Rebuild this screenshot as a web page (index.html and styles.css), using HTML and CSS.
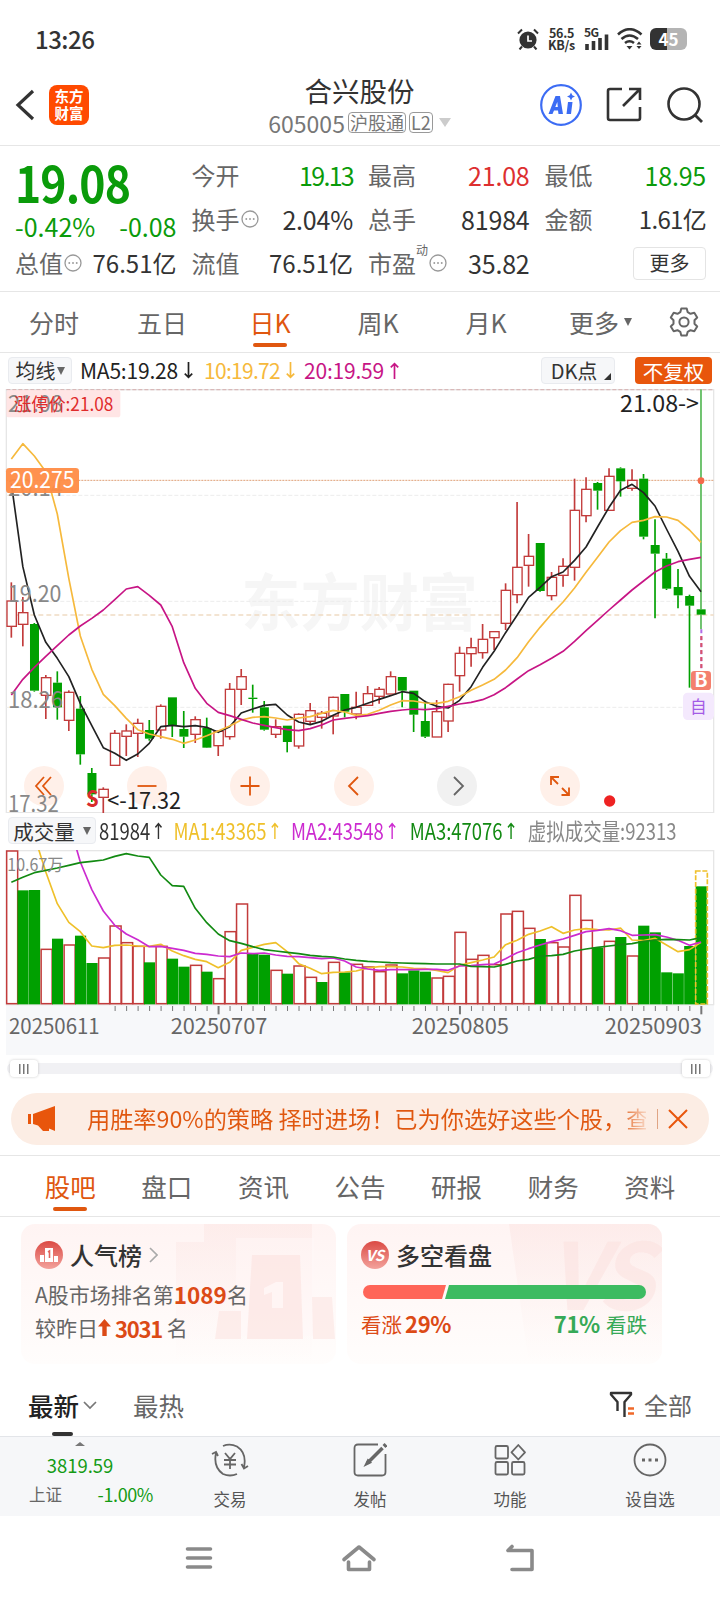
FILE: index.html
```html
<!DOCTYPE html>
<html lang="zh-CN">
<head>
    <meta charset="UTF-8">
    <meta name="viewport" content="width=device-width, initial-scale=1.0">
    <title>合兴股份 605005</title>
    <link rel="stylesheet" href="styles.css">
</head>
<body>
    <div class="status-bar">
        <span class="clock">13:26</span>
        <div class="status-icons">
            <svg width="22" height="22" viewBox="0 0 22 22"><circle cx="11" cy="12" r="8.6" fill="#333"/><path d="M1 5.5L5 1.5M21 5.5L17 1.5M5 18.5L2.5 21.5M17 18.5L19.5 21.5" stroke="#333" stroke-width="2"/><path d="M11 7.5V13H15" stroke="#fff" stroke-width="1.7" fill="none"/></svg>
            <div class="net-speed">56.5<br>KB/s</div>
            <svg width="26" height="22" viewBox="0 0 26 22"><text x="0" y="9" class="net-type">5G</text><path d="M3 16V22M9.5 13V22M16 10V22M22.500 6.5V22" stroke="#333" stroke-width="3.6"/></svg>
            <svg width="26" height="22" viewBox="0 0 26 22"><path d="M1 6.5Q12.5 -4 24.5 6.5M4.5 11Q12.5 4 21 11M8 15Q12.5 11.5 17 15" fill="none" stroke="#333" stroke-width="2.6"/><path d="M9.5 18H15.5L12.5 21.5Z" fill="#333"/><path d="M19.5 16.5L22 13.5L24.5 16.5ZM19.5 18L22 21L24.5 18Z" fill="#333"/></svg>
            <div class="battery">45</div>
        </div>
    </div>

    <header class="header">
        <div class="header-left">
            <svg width="20" height="32" viewBox="0 0 20 32"><path d="M18 2L3 16L18 30" fill="none" stroke="#333" stroke-width="3.2"/></svg>
            <div class="logo">东方<br>财富</div>
        </div>
        <div class="header-title">
            <h1>合兴股份</h1>
            <div class="stock-code">605005<span class="tag">沪股通</span><span class="tag">L2</span><i class="caret"></i></div>
        </div>
        <div class="header-right">
            <svg width="42" height="42" viewBox="0 0 42 42"><circle cx="21" cy="21" r="19.8" fill="#fff" stroke="#3c6cf4" stroke-width="2.2"/><path d="M8.5 30L15.5 12H20L23 30H18.5L18 26.5H14L12.5 30ZM15.3 23H17.8L17.3 18Z" fill="#3c6cf4" fill-rule="evenodd"/><path d="M28 18H32.5L31 30H26.5ZM31 8.5L32.3 11.2L35 12.5L32.3 13.8L31 16.5L29.7 13.8L27 12.5L29.7 11.2Z" fill="#3c6cf4"/></svg>
            <svg width="36" height="36" viewBox="0 0 36 36"><path d="M16 2H4Q2 2 2 4V31Q2 33 4 33H32Q34 33 34 31V20M23 2H34V13M33 3L17 19" fill="none" stroke="#333" stroke-width="2.6"/></svg>
            <svg width="38" height="38" viewBox="0 0 38 38"><circle cx="18" cy="18" r="15.5" fill="none" stroke="#333" stroke-width="2.6"/><path d="M29 29L36 36" stroke="#333" stroke-width="2.8"/></svg>
        </div>
    </header>

    <section class="quote">
        <div class="price-block">
            <div class="price">19.08</div>
            <div class="change"><span>-0.42%</span><span>-0.08</span></div>
        </div>
        <div class="cell"><span>今开</span><b class="down tight">19.13</b></div>
        <div class="cell"><span>最高</span><b class="up">21.08</b></div>
        <div class="cell"><span>最低</span><b class="down">18.95</b></div>
        <div class="cell"><span>换手<svg class="dots"><use href="#dots"/></svg></span><b>2.04%</b></div>
        <div class="cell"><span>总手</span><b>81984</b></div>
        <div class="cell"><span>金额</span><b class="tight-cn">1.61亿</b></div>
        <div class="cell"><span>总值<svg class="dots"><use href="#dots"/></svg></span><b class="cn">76.51亿</b></div>
        <div class="cell"><span>流值</span><b class="cn">76.51亿</b></div>
        <div class="cell"><span>市盈<sup>动</sup><svg class="dots"><use href="#dots"/></svg></span><b>35.82</b></div>
        <div class="cell cell-more"><button class="more-btn">更多</button></div>
    </section>

    <nav class="period-tabs">
        <a>分时</a>
        <a>五日</a>
        <a class="active">日K</a>
        <a>周K</a>
        <a>月K</a>
        <a class="more">更多<i class="caret caret-sm"></i></a>
        <a><svg width="30" height="30" viewBox="0 0 30 30"><path d="M12.3 1.5H17.7L18.7 5.2L21.5 6.8L25.3 5.8L28.2 10.5L25.5 13.3V16.7L28.2 19.5L25.3 24.2L21.5 23.2L18.7 24.8L17.7 28.5H12.3L11.3 24.8L8.5 23.2L4.7 24.2L1.8 19.5L4.5 16.7V13.3L1.8 10.5L4.7 5.8L8.5 6.8L11.3 5.2Z" fill="none" stroke="#666" stroke-width="2" stroke-linejoin="round"/><circle cx="15" cy="15" r="4.6" fill="none" stroke="#666" stroke-width="2"/></svg></a>
    </nav>

    <div class="ma-row">
        <button class="chip">均线<i class="caret caret-sm"></i></button>
        <span class="ma5">MA5:19.28<svg class="arrow"><use href="#arrow-down"/></svg></span>
        <span class="ma10">10:19.72<svg class="arrow"><use href="#arrow-down"/></svg></span>
        <span class="ma20">20:19.59<svg class="arrow"><use href="#arrow-up"/></svg></span>
        <button class="chip chip-dk">DK点<i class="corner"></i></button>
        <button class="chip chip-on">不复权</button>
    </div>

    <div class="chart">
        <div class="chart-tools">
            <button><svg width="20" height="20" viewBox="0 0 20 20"><path d="M10 1L2 10L10 19M17 1L9 10L17 19"/></svg></button>
            <button><svg width="20" height="20" viewBox="0 0 20 20"><path d="M0.5 10H19.5"/></svg></button>
            <button><svg width="20" height="20" viewBox="0 0 20 20"><path d="M0.5 10H19.5M10 0.5V19.5"/></svg></button>
            <button><svg width="20" height="20" viewBox="0 0 20 20"><path d="M14 1L5 10L14 19"/></svg></button>
            <button class="gray"><svg width="20" height="20" viewBox="0 0 20 20"><path d="M7 1L16 10L7 19"/></svg></button>
            <button><svg width="20" height="20" viewBox="0 0 20 20"><path d="M1 9V1H9M1 1L8 8M11.5 19H19V11.5M19 19L12 12"/></svg></button>
        </div>
        <svg id="kline" width="720" height="424" viewBox="0 27 2160 1272"></svg>
    </div>

    <div class="vol-row">
        <button class="chip">成交量<i class="caret caret-sm"></i></button>
        <div class="vol-values">
            <span>81984<svg class="arrow"><use href="#arrow-up"/></svg></span>
            <span class="vma1">MA1:43365<svg class="arrow"><use href="#arrow-up"/></svg></span>
            <span class="vma2">MA2:43548<svg class="arrow"><use href="#arrow-up"/></svg></span>
            <span class="vma3">MA3:47076<svg class="arrow"><use href="#arrow-up"/></svg></span>
            <span class="vest">虚拟成交量:92313</span>
        </div>
    </div>

    <svg id="volume" class="volume" width="720" height="205" viewBox="0 119 2160 615"></svg>

    <div class="range"><i></i><i></i></div>

    <div class="banner">
        <svg width="28" height="26" viewBox="0 0 28 26"><path d="M0 8H3V18H0ZM5 8L27 0V25L21 22.5V25H15L10 19.5L5 18Z" fill="#e8560c"/></svg>
        <div class="banner-text">用胜率90%的策略 择时进场！已为你选好这些个股，查</div>
        <i class="banner-line"></i>
        <svg width="20" height="20" viewBox="0 0 20 20"><path d="M1 1L19 19M19 1L1 19" stroke="#e8560c" stroke-width="2"/></svg>
    </div>

    <nav class="section-tabs">
        <a class="active">股吧</a>
        <a>盘口</a>
        <a>资讯</a>
        <a>公告</a>
        <a>研报</a>
        <a>财务</a>
        <a>资料</a>
    </nav>

    <div class="cards">
        <div class="card">
            <svg class="card-bg" width="160" height="140" viewBox="0 0 160 140">
                <path d="M0 18H28V0H136V140H0Z" fill="url(#fade)" opacity=".45"/>
                <path d="M60 14H138V112H60Z" fill="#fff8f7" opacity=".5"/>
                <path d="M76 31H124L127 115H71Z" fill="#fce3e1" opacity=".65"/>
                <path d="M43 87H65V115H39ZM136 73H156L159 115H137Z" fill="#fce6e4" opacity=".65"/>
                <path d="M88 64L100 58H107V84H96V68L88 71Z" fill="#fff5f4"/>
            </svg>
            <div class="card-title">
                <svg width="28" height="28" viewBox="0 0 28 28"><circle cx="14" cy="14" r="14" fill="url(#badge)"/><path d="M10 7H18V21H10ZM5 14H9V21H5ZM19 15H23V21H19Z" fill="#fff"/><path d="M13 11L14.5 10V17" stroke="#e1635c" stroke-width="1.6" fill="none"/></svg>
                <h2>人气榜</h2>
                <svg width="9" height="16" viewBox="0 0 9 16"><path d="M1 1L8 8L1 15" fill="none" stroke="#aaa" stroke-width="1.6"/></svg>
            </div>
            <p>A股市场排名第<b>1089</b>名</p>
            <p>较昨日<svg width="13" height="17" viewBox="0 0 13 17"><path d="M6.5 0L13 7.5H8.7V17H4.3V7.5H0Z" fill="#dc4a16"/></svg><b class="rise">3031</b> 名</p>
        </div>
        <div class="card">
            <svg class="card-bg" width="153" height="140" viewBox="0 0 153 140">
                <path d="M0 0H153V140H20Z" fill="url(#fade)" opacity=".5"/>
                <text x="38" y="86" class="vs-mark">VS</text>
            </svg>
            <div class="card-title">
                <svg width="28" height="28" viewBox="0 0 28 28"><circle cx="14" cy="14" r="14" fill="url(#badge)"/><text x="14" y="20" class="vs-badge">VS</text></svg>
                <h2>多空看盘</h2>
            </div>
            <div class="vote-bar"><i class="vote-up"></i><i class="vote-down"></i></div>
            <div class="vote-text"><span class="bull">看涨<b>29%</b></span><span class="bear"><b>71%</b>看跌</span></div>
        </div>
    </div>

    <div class="sort-row">
        <a class="active">最新<svg width="14" height="9" viewBox="0 0 14 9"><path d="M1 1L7 7L13 1" fill="none" stroke="#777" stroke-width="1.7"/></svg></a>
        <a>最热</a>
        <a class="filter"><svg width="26" height="28" viewBox="0 0 26 28"><path d="M8.5 20V11L2 3.5V2H22V3.5L15.5 11V26" fill="none" stroke="#333" stroke-width="2.4" stroke-linejoin="round"/><path d="M19 17.5H25M19 22.5H25" stroke="#f0682a" stroke-width="2.6"/></svg>全部</a>
    </div>

    <footer class="tool-bar">
        <div class="index">
            <i class="index-caret"></i>
            <div class="index-value">3819.59</div>
            <div class="index-change"><span>上证</span><b>-1.00%</b></div>
        </div>
        <a><svg width="38" height="34" viewBox="0 0 38 34"><path d="M12 3Q19 0 26 3.5Q36 10 33 24M26 31Q19 34 12 31Q2 24 5 10M1 11L5 9L7 13M37 23L33 25.5L30.5 21M14 10L19 16L24 10M19 16V26M13 17H25M13 21.5H25"/></svg>交易</a>
        <a><svg width="34" height="34" viewBox="0 0 34 34"><path d="M25 1.5H5Q1.500 1.5 1.5 5V29Q1.5 32.5 5 32.5H29Q32.5 32.5 32.5 29V11"/><path d="M29.5 5L14.5 20" stroke-width="3.6"/><path d="M15 17L12.500 22L17.500 19.500Z"/><path d="M31 3.5L33 1.5" stroke-width="4"/></svg>发帖</a>
        <a><svg width="32" height="32" viewBox="0 0 32 32"><rect x="1.5" y="2" width="12.5" height="12.5" rx="1.5"/><rect x="1.5" y="18" width="12.5" height="12.5" rx="1.5"/><rect x="18" y="18" width="12.5" height="12.5" rx="1.5"/><path d="M24.3 1L31 8.3L24.3 15.5L17.5 8.3Z" stroke-linejoin="round"/></svg>功能</a>
        <a><svg width="34" height="34" viewBox="0 0 34 34"><circle cx="17" cy="17" r="15.5"/><path d="M9 17H12M15.5 17H18.5M22 17H25" stroke-width="3"/></svg>设自选</a>
    </footer>

    <div class="sys-nav">
        <svg width="28" height="24" viewBox="0 0 28 24"><path d="M2.500 3H25.500M2.500 12H25.500M2.500 21H25.500"/></svg>
        <svg width="36" height="28" viewBox="0 0 36 28"><path d="M3 15.5L18 3L33 15.5M7.5 18V25.5H28.5V18"/></svg>
        <svg width="30" height="28" viewBox="0 0 30 28"><path d="M7 2.5L3 6.5H27V25.5H7"/></svg>
    </div>

    <svg width="0" height="0" class="defs">
        <defs>
            <symbol id="arrow-up" viewBox="0 0 10 16"><path d="M5 16V1.5M1.5 5L5 1.5L8.5 5" fill="none" stroke="currentColor" stroke-width="1.6"/></symbol>
            <symbol id="arrow-down" viewBox="0 0 10 16"><path d="M5 0V14.5M1.5 11L5 14.5L8.5 11" fill="none" stroke="currentColor" stroke-width="1.6"/></symbol>
            <symbol id="dots" viewBox="0 0 18 18"><circle cx="9" cy="9" r="8" fill="none" stroke="#999" stroke-width="1.3"/><path d="M4.500 9H6.100M8.200 9H9.800M11.900 9H13.500" stroke="#888" stroke-width="1.600"/></symbol>
            <linearGradient id="badge" x1="0" y1="0" x2="0" y2="1"><stop offset="0" stop-color="#db4a44"/><stop offset="1" stop-color="#f3a29c"/></linearGradient>
            <linearGradient id="fade" x1="0" y1="0" x2="0" y2="1"><stop offset="0" stop-color="#fbe3e1"/><stop offset="1" stop-color="#fffdfc"/></linearGradient>
        </defs>
    </svg>

    <script src="chart.js"></script>
</body>
</html>
```
FILE: styles.css
```css
* {
    box-sizing: border-box;
}

body {
    margin: 0;
    width: 720px;
    height: 1600px;
    overflow: hidden;
    background: #fff;
    color: #333;
    font-family: "Noto Sans CJK SC", "Noto Sans", sans-serif;
    line-height: 1;
}

h1, h2, p {
    margin: 0;
    font-weight: normal;
}

i {
    font-style: normal;
}

svg {
    display: block;
    flex: none;
}

button {
    font-family: inherit;
    padding: 0;
    border: none;
}

.defs {
    position: absolute;
}

.caret {
    display: inline-block;
    border: 6.5px solid transparent;
    border-top: 9px solid #ccc;
    border-bottom: none;
}

.caret-sm {
    border-width: 4.5px;
    border-top: 8px solid #666;
    border-bottom: none;
}

/* status bar */
.status-bar {
    height: 72px;
    padding: 6px 33px 0 35px;
    display: flex;
    align-items: center;
    justify-content: space-between;
}

.clock {
    font-size: 24px;
    font-weight: 500;
    letter-spacing: -0.5px;
}

.status-icons {
    display: flex;
    align-items: center;
    gap: 7px;
}

.net-speed {
    width: 31px;
    font-size: 12.5px;
    font-weight: bold;
    text-align: center;
    letter-spacing: -0.3px;
}

.net-type {
    font-size: 12px;
    font-weight: bold;
    letter-spacing: -0.5px;
    fill: #333;
}

.battery {
    width: 37px;
    height: 22px;
    border-radius: 6px;
    background: linear-gradient(to right, #333 45%, #b4b4b4 45%);
    color: #fff;
    font-size: 17px;
    font-weight: bold;
    line-height: 21px;
    text-align: center;
}

/* header */
.header {
    height: 74px;
    border-bottom: 1px solid #e6e6e6;
    padding: 0 16px 7px 15px;
    display: grid;
    grid-template-columns: 1fr 190px 1fr;
    align-items: center;
}

.header-left {
    display: flex;
    align-items: center;
    gap: 14px;
}

.logo {
    width: 40px;
    height: 40px;
    border-radius: 8px;
    background: #ff4a00;
    color: #fff;
    font-size: 14.5px;
    font-weight: bold;
    line-height: 16.5px;
    padding-top: 3px;
    text-align: center;
}

.header-title {
    display: flex;
    flex-direction: column;
    align-items: center;
}

.header-title h1 {
    font-size: 27.5px;
    line-height: 38px;
    margin-top: -3px;
}

.stock-code {
    display: flex;
    align-items: center;
    color: #777;
    font-size: 23px;
    line-height: 28px;
    white-space: nowrap;
}

.tag {
    border: 1px solid #999;
    border-radius: 4px;
    font-size: 18px;
    line-height: 19px;
    padding: 0 1px;
    margin-left: 3px;
}

.stock-code .caret {
    margin-left: 6px;
}

.header-right {
    display: flex;
    align-items: center;
    justify-content: flex-end;
    gap: 24px;
}

/* quote numbers */
.quote {
    height: 146px;
    padding: 7px 14px 7px 15px;
    border-bottom: 1px solid #e6e6e6;
    display: grid;
    grid-template-columns: repeat(4, 1fr);
    grid-template-rows: repeat(3, 44px);
    column-gap: 15px;
}

.price-block {
    grid-row: span 2;
    color: #0a9b0a;
}

.price {
    font-size: 50px;
    font-weight: bold;
    letter-spacing: -1px;
    line-height: 57px;
    transform: scaleX(0.89);
    transform-origin: left;
}

.change {
    display: flex;
    justify-content: space-between;
    font-size: 25px;
    line-height: 32px;
}

.cell {
    display: flex;
    align-items: center;
    justify-content: space-between;
    font-size: 24px;
    color: #666;
    white-space: nowrap;
}

.cell > span {
    display: flex;
    align-items: center;
}

.cell b {
    font-size: 25px;
    font-weight: normal;
    letter-spacing: -0.2px;
    color: #333;
}

.cell b.cn {
    font-size: 24px;
    letter-spacing: 0;
}

.cell b.tight-cn {
    font-size: 24px;
    letter-spacing: -0.7px;
}

.cell b.tight {
    letter-spacing: -1.7px;
}

.cell b.up {
    color: #dd2f2f;
}

.cell b.down {
    color: #0a9b0a;
}

.cell sup {
    font-size: 12px;
    align-self: flex-start;
    margin-top: -7px;
}

.dots {
    width: 18px;
    height: 18px;
    margin-left: 1px;
}

.cell-more {
    justify-content: flex-end;
}

.more-btn {
    width: 73px;
    height: 33px;
    border: 1px solid #e4e4e4;
    border-radius: 4px;
    background: #fff;
    color: #333;
    font-size: 20px;
    line-height: 28px;
}

/* period tabs */
.period-tabs {
    height: 61px;
    border-bottom: 1px solid #e6e6e6;
    display: grid;
    grid-template-columns: repeat(6, 108px) 72px;
}

.period-tabs a {
    position: relative;
    display: flex;
    align-items: center;
    justify-content: center;
    gap: 5px;
    font-size: 25px;
    color: #666;
}

.period-tabs .more {
    padding-left: 13px;
}

.period-tabs .active,
.section-tabs .active {
    color: #e0570f;
}

.period-tabs .active::after,
.section-tabs .active::after {
    content: "";
    position: absolute;
    left: 50%;
    bottom: 5px;
    width: 34px;
    height: 4px;
    margin-left: -17px;
    border-radius: 2px;
    background: #e0570f;
}

/* moving averages */
.ma-row {
    height: 36px;
    padding: 0 8px 1px 8px;
    display: flex;
    align-items: center;
    font-size: 21px;
    letter-spacing: -0.2px;
    white-space: nowrap;
}

.ma-row span {
    display: flex;
    align-items: center;
    gap: 4px;
}

.arrow {
    width: 13px;
    height: 17px;
}

.chip {
    display: flex;
    flex: none;
    align-items: center;
    justify-content: center;
    height: 27px;
    border: 1px solid #e9ebef;
    border-radius: 4px;
    background: #f6f7f9;
    color: #333;
    font-size: 20px;
    white-space: nowrap;
}

.ma-row .chip:first-child {
    width: 64px;
    gap: 1px;
    margin-right: 8px;
}

.ma5 {
    width: 124px;
    color: #222;
}

.ma10 {
    width: 100px;
    color: #f6b93c;
    letter-spacing: -0.7px;
}

.ma20 {
    color: #c71585;
}

.chip-dk {
    position: relative;
    width: 74px;
    margin-left: auto;
    margin-right: 20px;
    padding-right: 8px;
}

.corner {
    position: absolute;
    right: 3px;
    bottom: 3px;
    border-left: 7px solid transparent;
    border-bottom: 7px solid #333;
}

.ma-row .chip-on {
    width: 77px;
    border: none;
    background: #e8560c;
    color: #fff;
    font-size: 20.5px;
}

/* chart */
.chart {
    position: relative;
    height: 424px;
}

#kline {
    position: relative;
}

.chart-tools {
    position: absolute;
    left: 24px;
    top: 377px;
    display: flex;
    gap: 63.2px;
}

.chart-tools button {
    width: 40px;
    height: 40px;
    border-radius: 50%;
    background: #fff0e9;
    display: flex;
    align-items: center;
    justify-content: center;
}

.chart-tools path {
    fill: none;
    stroke: #e0570f;
    stroke-width: 1.8;
}

.chart-tools .gray {
    background: #f1f1f1;
}

.chart-tools .gray path {
    stroke: #666;
}

#kline text,
#volume text {
    font-family: "Noto Sans CJK SC", sans-serif;
}

.vol-row {
    height: 37px;
    padding: 0 0 2px 8px;
    display: flex;
    align-items: center;
}

.vol-row .chip {
    width: 88px;
    gap: 8px;
    margin-right: 3px;
    font-size: 20.5px;
}

.vol-values {
    display: grid;
    grid-template-columns: 91px 143px 145px 144px auto;
    font-size: 22.5px;
    white-space: nowrap;
    transform: scaleX(0.82);
    transform-origin: left;
}

.vol-values span {
    display: flex;
    align-items: center;
    gap: 4px;
}

.vma1 {
    color: #efc02a;
}

.vma2 {
    color: #cc2bd0;
}

.vma3 {
    color: #128a12;
}

.vest {
    color: #888;
}

/* range slider */
.range {
    height: 11px;
    margin: 8px 7px 0 7px;
    border-radius: 6px;
    background: #f1f1f4;
    display: flex;
    align-items: center;
    justify-content: space-between;
    padding: 0 3px;
}

.range i {
    width: 28px;
    height: 17px;
    border-radius: 4px;
    background: linear-gradient(#777, #777) 9px 4px / 1.5px 10px no-repeat,
                linear-gradient(#777, #777) 13px 4px / 1.5px 10px no-repeat,
                linear-gradient(#777, #777) 17px 4px / 1.5px 10px no-repeat,
                #fff;
    box-shadow: 0 0 3px rgba(0, 0, 0, 0.2);
}

/* banner */
.banner {
    height: 52px;
    margin: 19px 11px 10px;
    padding: 0 21px 0 17px;
    border-radius: 26px;
    background: #fcede4;
    display: flex;
    align-items: center;
}

.banner-text {
    width: 560px;
    margin-left: 31px;
    font-size: 23.2px;
    line-height: 34px;
    margin-top: -2px;
    white-space: nowrap;
    overflow: hidden;
    color: transparent;
    background: linear-gradient(to right, #e0570f 95%, #fcede4 101%);
    -webkit-background-clip: text;
    background-clip: text;
}

.banner-line {
    width: 1px;
    height: 20px;
    margin: 0 10px 0 11px;
    background: #e0a584;
}

/* section tabs */
.section-tabs {
    height: 62px;
    border-top: 1px solid #e6e6e6;
    border-bottom: 1px solid #e6e6e6;
    padding: 0 22px;
    display: grid;
    grid-template-columns: repeat(7, 1fr);
}

.section-tabs a {
    position: relative;
    display: flex;
    align-items: center;
    justify-content: center;
    font-size: 25.5px;
    color: #666;
}

/* cards */
.cards {
    display: flex;
    gap: 11px;
    padding: 7px 21px 0;
}

.card {
    position: relative;
    width: 315px;
    height: 140px;
    padding: 17px 14px 0;
    border-radius: 14px;
    background: linear-gradient(#fff4f3, #fffdfc);
    overflow: hidden;
}

.card > * {
    position: relative;
}

.card .card-bg {
    position: absolute;
    right: 0;
    top: 0;
}

.card-title {
    display: flex;
    align-items: center;
    gap: 7px;
    height: 28px;
    margin-bottom: 9px;
}

.card-title h2 {
    font-size: 24px;
    font-weight: 500;
    line-height: 28px;
    margin-top: -1px;
}

.card p {
    display: flex;
    align-items: center;
    height: 33px;
    font-size: 21px;
    color: #666;
    white-space: pre;
}

.card p b {
    font-size: 22.5px;
    color: #dc4a16;
}

.card p .rise {
    font-size: 22px;
    letter-spacing: -1.2px;
}

.card p svg {
    margin: 0 4px 0 0;
}

.vs-mark {
    font-size: 92px;
    font-weight: bold;
    font-style: italic;
    letter-spacing: -6px;
    fill: #fbdcd9;
    opacity: 0.4;
}

.vs-badge {
    font-size: 15px;
    font-weight: bold;
    font-style: italic;
    fill: #fff;
    text-anchor: middle;
}

.vote-bar {
    display: flex;
    height: 14px;
    margin: 16px 2px 0 2px;
    border-radius: 7px;
    overflow: hidden;
}

.vote-up {
    width: 83px;
    background: #ff6558;
    clip-path: polygon(0 0, 100% 0, calc(100% - 4px) 100%, 0 100%);
}

.vote-down {
    flex: 1;
    margin-left: -1px;
    background: #3dbb61;
    clip-path: polygon(4px 0, 100% 0, 100% 100%, 0 100%);
}

.vote-text {
    display: flex;
    justify-content: space-between;
    margin-top: 13px;
    padding-right: 1px;
    font-size: 20.5px;
    line-height: 22px;
}

.vote-text b {
    font-size: 22px;
    letter-spacing: -0.3px;
}

.bull {
    color: #dc4a16;
}

.bull b {
    margin-left: 3px;
}

.bear {
    color: #36a957;
}

.bear b {
    margin-right: 6px;
}

/* sort row */
.sort-row {
    height: 73px;
    padding: 14px 28px 0;
    border-bottom: 1px solid #e3e5e9;
    display: flex;
    font-size: 25.5px;
    color: #666;
}

.sort-row a {
    position: relative;
    display: flex;
    align-items: center;
    height: 58px;
    padding-bottom: 4px;
}

.sort-row .active {
    width: 105px;
    gap: 4px;
    color: #222;
    font-weight: 500;
}

.sort-row .active::after {
    content: "";
    position: absolute;
    left: 24px;
    bottom: 0;
    width: 21px;
    height: 4px;
    border-radius: 2px;
    background: #333;
}

.sort-row .filter {
    margin-left: auto;
    gap: 9px;
    font-size: 24px;
}

/* bottom tools */
.tool-bar {
    height: 79px;
    background: #f6f7f9;
    display: grid;
    grid-template-columns: 160px repeat(4, 140px);
}

.tool-bar a {
    display: flex;
    flex-direction: column;
    align-items: center;
    padding-top: 6px;
    font-size: 16.5px;
    line-height: 20px;
    color: #555;
}

.tool-bar a svg {
    height: 34px;
    margin-bottom: 12px;
    fill: none;
    stroke: #666;
    stroke-width: 1.8;
}

.index {
    display: flex;
    flex-direction: column;
    align-items: center;
    color: #149b14;
}

.index-caret {
    margin-top: 5px;
    border: 5.5px solid transparent;
    border-top: none;
    border-bottom: 4.5px solid #777;
}

.index-value {
    font-size: 18.5px;
    line-height: 20px;
    margin-top: 9px;
}

.index-change {
    display: flex;
    justify-content: space-between;
    width: 124px;
    margin: 9px 0 0 22px;
    font-size: 16.5px;
    line-height: 20px;
}

.index-change span {
    color: #666;
}

.index-change b {
    font-weight: normal;
    font-size: 18px;
    letter-spacing: -0.4px;
}

.sys-nav {
    height: 84px;
    display: flex;
    align-items: center;
    justify-content: center;
    gap: 128px;
}

.sys-nav path {
    fill: none;
    stroke: #8a8a8a;
    stroke-width: 3.6;
    stroke-linecap: round;
    stroke-linejoin: round;
}
```
FILE: chart.js
```js
const RED = '#c23b3b';
const GREEN = '#00a000';
const step = 34.483;
const firstX = 34;

// [body top, body bottom, high, low, rising]
const candles = [
    [663, 739, 607, 773, 1], [698, 733, 651, 799, 1], [732, 932, 729, 935, 0], [893, 946, 885, 1017, 1],
    [908, 982, 874, 1019, 0], [937, 1021, 931, 1053, 1], [986, 1123, 948, 1154, 0], [1179, 1243, 1164, 1266, 0],
    [1228, 1252, 1222, 1300, 1], [1060, 1156, 1050, 1156, 1], [1053, 1069, 1033, 1128, 1], [1030, 1060, 1016, 1131, 1],
    [1050, 1076, 1020, 1082, 0], [979, 1050, 973, 1076, 1], [952, 1038, 952, 1071, 0], [1047, 1070, 993, 1104, 0],
    [1019, 1063, 1009, 1089, 1], [1044, 1103, 1013, 1104, 0], [1054, 1097, 1050, 1128, 1], [928, 1070, 909, 1079, 1],
    [890, 928, 867, 975, 1], [953, 957, 914, 998, 0], [982, 1049, 963, 1052, 0], [1040, 1063, 1018, 1074, 1],
    [1037, 1086, 1037, 1117, 0], [1003, 1098, 1000, 1106, 1], [992, 1024, 969, 1034, 1], [1000, 1012, 993, 1046, 1],
    [952, 1008, 950, 1063, 1], [942, 995, 942, 1012, 0], [982, 1002, 935, 1018, 1], [941, 976, 918, 976, 1],
    [928, 949, 921, 971, 1], [890, 942, 874, 942, 1], [891, 932, 891, 982, 0], [932, 1004, 932, 1056, 0],
    [1023, 1070, 962, 1074, 0], [995, 1071, 960, 1071, 1], [913, 1023, 911, 1056, 1], [820, 887, 800, 935, 1],
    [803, 821, 773, 860, 1], [778, 818, 732, 836, 1], [755, 773, 755, 810, 1], [631, 730, 610, 750, 1],
    [562, 644, 366, 670, 1], [529, 556, 462, 620, 1], [489, 633, 489, 635, 0], [592, 647, 576, 661, 1],
    [559, 586, 535, 620, 1], [391, 562, 296, 602, 1], [328, 407, 292, 427, 1], [309, 332, 306, 389, 0],
    [289, 391, 265, 391, 1], [265, 304, 262, 350, 0], [301, 325, 268, 332, 1], [296, 470, 282, 478, 0],
    [495, 521, 418, 715, 0], [536, 626, 519, 630, 0], [621, 646, 567, 685, 0], [648, 677, 644, 923, 0],
    [688, 704, 28, 748, 0]
];

const ma5 = [310, 560, 705, 787, 835, 890, 970, 1037, 1103, 1120, 1141, 1122, 1090, 1040, 1036, 1040, 1037, 1042, 1057, 1040,
    999, 987, 976, 973, 1005, 1026, 1034, 1024, 1006, 990, 982, 970, 958, 947, 935, 940, 965, 979, 984, 961,
    920, 862, 814, 758, 706, 652, 622, 590, 576, 541, 501, 441, 382, 331, 313, 338, 378, 447, 514, 589, 635];
const ma10 = [237, 191, 228, 275, 402, 595, 768, 868, 943, 977, 1015, 1049, 1062, 1070, 1078, 1090, 1080, 1067, 1053, 1038,
    1020, 1012, 1010, 1014, 1020, 1014, 1010, 1000, 991, 996, 1006, 1003, 991, 975, 962, 963, 969, 970, 964, 950,
    931, 915, 898, 870, 833, 785, 742, 702, 666, 624, 577, 532, 486, 452, 427, 421, 410, 411, 421, 450, 487];
const ma20 = [945, 898, 862, 829, 797, 765, 738, 715, 690, 659, 627, 620, 646, 675, 740, 848, 925, 970, 997, 1007,
    1018, 1029, 1036, 1043, 1049, 1052, 1046, 1035, 1020, 1015, 1011, 1007, 1000, 994, 990, 987, 989, 986, 979, 972,
    967, 959, 944, 923, 897, 872, 854, 835, 814, 784, 752, 721, 690, 660, 630, 603, 576, 558, 545, 538, 532];

const volumes = [121, 240, 239, 416, 385, 403, 376, 458, 442, 346, 396, 407, 456, 407, 445, 469, 464, 484, 504, 363,
    280, 430, 433, 479, 490, 466, 500, 515, 455, 486, 461, 469, 483, 463, 489, 480, 484, 502, 497, 365,
    446, 434, 462, 310, 302, 353, 386, 396, 409, 254, 329, 412, 392, 380, 436, 346, 366, 486, 489, 407, 228];
// Bars whose colour does not follow the candle above them
const volumeFalling = [1, 27];
const vma1 = [null, null, 76, 185, 280, 336, 364, 407, 412, 405, 404, 407, 408, 402, 422, 436, 447, 454, 472, 456,
    420, 411, 402, 397, 424, 460, 474, 490, 486, 485, 482, 473, 469, 469, 470, 474, 475, 480, 487, 465,
    457, 449, 440, 403, 390, 372, 362, 349, 369, 359, 355, 358, 359, 353, 389, 391, 384, 404, 424, 418, 396];
const vma2 = [null, null, null, null, null, 35, 155, 238, 302, 345, 371, 388, 409, 408, 414, 420, 429, 432, 437, 439,
    428, 430, 428, 434, 438, 439, 442, 445, 443, 452, 470, 476, 480, 478, 478, 478, 477, 477, 480, 467,
    466, 463, 461, 445, 427, 415, 404, 394, 386, 375, 364, 360, 355, 361, 375, 374, 373, 380, 390, 405, 395];
const vma3 = [216, 201, 187, 180, 173, 165, 157, 153, 149, 138, 130, 137, 141, 194, 226, 228, 294, 337, 371, 391,
    399, 409, 418, 422, 426, 430, 435, 438, 440, 446, 450, 453, 455, 457, 458, 459, 460, 461, 461, 461,
    468, 469, 470, 462, 452, 447, 437, 436, 432, 422, 416, 411, 407, 403, 400, 393, 389, 387, 388, 389, 382];

function xAt(i) {
    return firstX + i * step;
}

function line(x1, y1, x2, y2, color, width, dash) {
    return `<line x1="${x1}" y1="${y1}" x2="${x2}" y2="${y2}" stroke="${color}" stroke-width="${width}" stroke-dasharray="${dash || 'none'}"/>`;
}

function curve(values, color) {
    const points = [];
    values.forEach((y, i) => {
        if (y !== null) points.push(`${xAt(i).toFixed(1)},${y}`);
    });
    return `<polyline points="${points.join(' ')}" fill="none" stroke="${color}" stroke-width="5" stroke-linejoin="round"/>`;
}

function label(text, x, y, width, size, color, extra) {
    return `<text x="${x}" y="${y}" textLength="${width}" lengthAdjust="spacingAndGlyphs" font-size="${size}" fill="${color}" ${extra || ''}>${text}</text>`;
}

function drawKline() {
    let out = '';
    out += label('东方财富', 724, 738, 710, 186, '#f6f6f6', 'font-weight="bold"');

    // Frame and grid
    out += `<rect x="19" y="29" width="2122" height="1269" fill="none" stroke="#e6e6e6" stroke-width="4"/>`;
    out += line(19, 29, 2141, 29, '#d9b9b9', 4, '12 6');
    [346, 664, 982].forEach(y => {
        out += line(19, y, 2141, y, '#ececec', 3, '12 6');
    });
    out += line(19, 705, 2141, 705, '#f0dcc4', 5, '15 9');
    out += line(19, 301, 2141, 301, '#dfa077', 3, '6 3');

    candles.forEach(([top, bottom, high, low, rising], i) => {
        const x = xAt(i);
        const color = rising ? RED : GREEN;
        const wick = i === 60 ? '#55b855' : color;
        out += line(x, high, x, top, wick, 5);
        out += line(x, bottom, x, low, wick, 5);
        if (rising) {
            out += `<rect x="${x - 13}" y="${top}" width="28" height="${bottom - top}" fill="#fff" stroke="${RED}" stroke-width="4"/>`;
        } else {
            out += `<rect x="${x - 13}" y="${top}" width="27" height="${bottom - top}" fill="${GREEN}"/>`;
        }
    });

    out += curve(ma5, '#222');
    out += curve(ma10, '#f6b93c');
    out += curve(ma20, '#c71585');

    // Limit price and cursor price
    out += `<rect x="19" y="30" width="342" height="82" rx="8" fill="#ffdede" opacity=".8"/>`;
    out += label('21.08', 24, 97, 165, 70, '#888');
    out += label('涨停价:21.08', 42, 92, 298, 54, '#e02b2b');
    out += label('20.14', 24, 348, 165, 70, '#888');
    out += `<rect x="18" y="264" width="219" height="75" rx="10" fill="#ff8c46" opacity=".95"/>`;
    out += label('20.275', 30, 325, 193, 68, '#fff');
    out += label('19.20', 24, 666, 160, 70, '#888');
    out += label('18.26', 24, 985, 165, 70, '#888');
    out += label('17.32', 24, 1297, 152, 70, '#888');
    out += label('S', 258, 1281, 38, 68, '#d92b2b', 'font-weight="bold"');
    out += label('&lt;-17.32', 322, 1288, 221, 70, '#222');
    out += label('21.08-&gt;', 1860, 95, 237, 70, '#222');
    out += `<circle cx="2103" cy="302" r="10" fill="#f4694a"/>`;
    out += `<circle cx="1829" cy="1263" r="17" fill="#ee2222"/>`;

    // Buy mark and watchlist mark
    out += line(2104, 748, 2104, 880, '#b06be8', 6, '12 9');
    out += line(2104, 768, 2104, 880, '#d8546a', 6, '12 9');
    out += `<rect x="2049" y="938" width="93" height="82" rx="14" fill="#f4e9fd"/>`;
    out += `<rect x="2073" y="873" width="60" height="57" rx="10" fill="#f4806e"/>`;
    out += label('B', 2083, 922, 40, 58, '#fff', 'font-weight="bold"');
    out += label('自', 2070, 999, 50, 50, '#a45be6');
    document.getElementById('kline').innerHTML = out;
}

function drawVolume() {
    let out = '';
    out += `<rect x="18" y="584" width="2124" height="150" fill="#f7f8fa"/>`;
    out += `<rect x="19" y="121" width="2122" height="462" fill="none" stroke="#e6e6e6" stroke-width="4"/>`;

    volumes.forEach((top, i) => {
        const x = xAt(i) - 16;
        if (candles[i][4] && !volumeFalling.includes(i)) {
            out += `<rect x="${x + 2}" y="${top + 1}" width="33" height="${579 - top}" fill="#fff" stroke="${RED}" stroke-width="4.5"/>`;
        } else {
            out += `<rect x="${x}" y="${top}" width="33.5" height="${582 - top}" fill="${GREEN}"/>`;
        }
    });
    out += `<rect x="2087" y="182" width="35" height="399" fill="none" stroke="#efc02a" stroke-width="5" stroke-dasharray="15 5"/>`;

    out += curve(vma1, '#efc02a');
    out += curve(vma2, '#cc2bd0');
    out += curve(vma3, '#128a12');
    out += label('10.67万', 22, 182, 168, 50, '#888');

    // Time axis
    for (let i = 9; i <= 60; i++) {
        const major = i === 18 || i === 39 || i === 60;
        out += line(xAt(i) + 1, 587, xAt(i) + 1, major ? 612 : 602, '#777', major ? 6 : 3);
    }
    out += label('20250611', 27, 671, 272, 64, '#666');
    out += label('20250707', 512, 671, 290, 64, '#666');
    out += label('20250805', 1235, 671, 292, 64, '#666');
    out += label('20250903', 1814, 671, 292, 64, '#666');
    document.getElementById('volume').innerHTML = out;
}

drawKline();
drawVolume();
```
